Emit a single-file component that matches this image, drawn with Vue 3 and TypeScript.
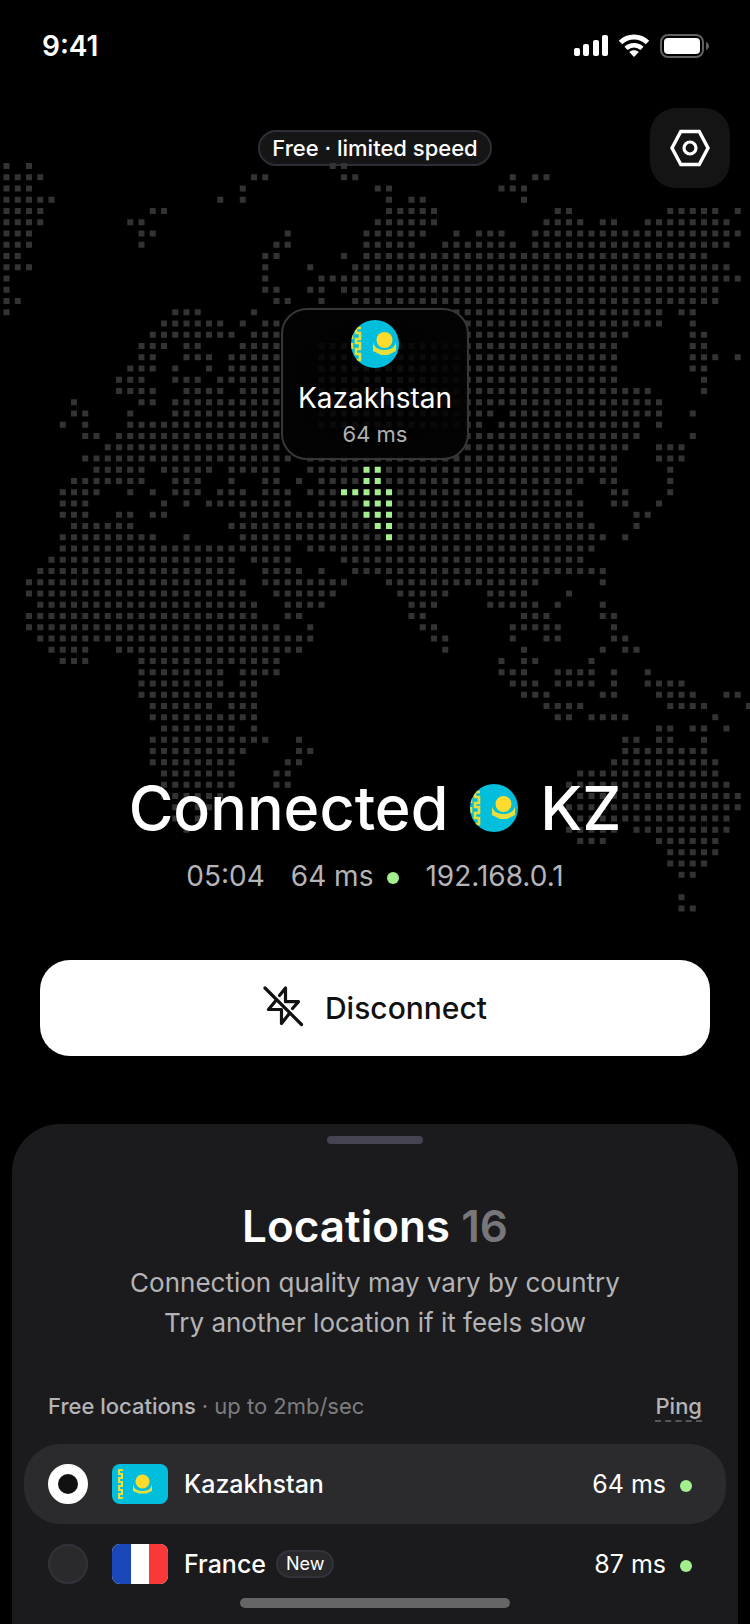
<script setup lang="ts">
import { computed, ref } from 'vue'

interface Location {
  id: string
  name: string
  ping: number
  isNew: boolean
}

const locations: Location[] = [
  { id: 'kz', name: 'Kazakhstan', ping: 64, isNew: false },
  { id: 'fr', name: 'France', ping: 87, isNew: true },
]

const selected = ref('kz')

/* Land cells of the dotted map: one line per grid row, as column ranges. */
const land: string[] = [
  '0 2 29-30',
  '0-3 22-23 30-31 45 47-48',
  '0-2 21 33-34 44-46',
  '0-4 19 21 34 36-37 46',
  '0-3 13-14 34-38 49-50 59-63 65',
  '0-3 11-12 33-38 48-51 53-54 57-64',
  '0-2 12-13 25 32-37 40 42-44 47-65',
  '0-2 12 24-25 32-36 39-45 47-64',
  '0-1 23-24 30 32-62',
  '0-2 23 27 31-64',
  '0 23 28-65',
  '0 23-24 27-28 30-63',
  '0-1 24-25 28 31-63',
  '0 15-17 22 40-58 60-61',
  '14-19 21 23-24 41-58 61',
  '13-20 22-24 41-55 61-62',
  '12-14 16-17 21-24 28-54 61-62',
  '12-13 16-18 20-24 28-54 61-63 65',
  '11-13 15 18 20-24 28-54 61-62',
  '10-12 15-17 19-24 28-54 62',
  '10-13 16-19 21-24 28-57 62',
  '6 12-13 15-24 28-58',
  '6-7 11 15-24 28-43 45-58 61',
  '5 7 11-24 28-42 44-56 58',
  '7-8 10-24 41-56 61',
  '9-24 41-55 58-60',
  '7-25 27-54 58-60',
  '8-12 14-18 20-24 27-31 34-54 59',
  '6-12 15-17 20 23-24 26 28-31 34-51 53-54 59',
  '5-8 11 13 15-17 19-21 23-25 27-29 35-50 54-55 59',
  '5-7 14 16 18-25 28-31 35-51 54-55 58',
  '5-7 10-11 13-14 21-31 35-51 56-57',
  '6-11 20-32 35-52 56',
  '5-13 16 21-33 35-53 55',
  '5-25 27-52',
  '4-20 22-25 30-51',
  '3-20 23-26 28 31-53',
  '2-21 23-30 34-47 53',
  '2-21 24-29 35-39 43-46 50',
  '3-22 25-28 36-38 43-47 49 53',
  '2-22 25-26 36-37 46-48 53-54',
  '2-24 27 37-38 45-49 54',
  '3-27 38-39 45 48-49 54-55',
  '4-7 10-26 39 46 53 55-56',
  '5-7 12-24 44 46-47 52',
  '12-19 21-24 44-46 49-52 54 57',
  '12-19 21-22 45-47 49-52 54 57-60',
  '12-22 46-48 53-54 58-61 64-65',
  '13-18 20-22 48-51 59-62 66',
  '13-22 49-50 52-55 63',
  '14-20 22 58-59 61-62 64',
  '13-23 26 55-56 58-59 62',
  '13-21 26-27 55-62',
  '13-20 25-26 54-63',
  '14-20 24-25 51-63',
  '14-20 24-25 50-64',
  '14-19 51-65',
  '15 17-18 50-65',
  '15 17 51-64',
  '16 50-54 56-64',
  '51-53 58-63',
  '59-63',
  '59-62',
  '60-61',
  '',
  '60',
  '60-61',
]

/* Cells of the connected country, keyed by grid row. */
const active: Record<number, string> = {
  27: '32-33',
  28: '32-33',
  29: '30-34',
  30: '32-34',
  31: '32-34',
  32: '33-34',
  33: '34',
}

const PITCH = 45
const DOT = 24

function rowPath(ranges: string, row: number): string {
  return ranges
    .split(' ')
    .filter(Boolean)
    .map((range) => {
      const [from, to = from] = range.split('-').map(Number)
      let d = ''
      for (let col = from; col <= to; col++) {
        d += `M${14 + col * PITCH} ${12 + row * PITCH}h${DOT}v${DOT}h-${DOT}z`
      }
      return d
    })
    .join('')
}

const landPath = computed(() => land.map(rowPath).join(''))
const activePath = computed(() =>
  Object.entries(active)
    .map(([row, ranges]) => rowPath(ranges, Number(row)))
    .join(''),
)
</script>

<template>
  <main class="screen">
    <header class="status-bar">
      <time class="clock">9:41</time>
      <div class="status-icons">
        <svg width="34" height="22" viewBox="0 0 34 22" fill="#fff" aria-label="Signal">
          <rect x="0" y="13" width="6" height="8" rx="2" />
          <rect x="9" y="9" width="6" height="12" rx="2" />
          <rect x="19" y="5" width="6" height="16" rx="2" />
          <rect x="28" y="0" width="6" height="21" rx="2" />
        </svg>
        <svg width="32" height="24" viewBox="0 0 32 24" fill="none" aria-label="Wi-Fi">
          <path d="M2.5 8.5C10 1.2 22 1.2 29.500 8.500" stroke="#fff" stroke-width="5" />
          <path d="M8 14.300C12.500 10.100 19.500 10.100 24 14.300" stroke="#fff" stroke-width="4.500" />
          <path d="M11.200 18C14 15.600 18 15.600 20.800 18L16 23z" fill="#fff" />
        </svg>
        <svg width="50" height="24" viewBox="0 0 50 24" fill="none" aria-label="Battery">
          <rect x="1" y="1" width="42" height="22" rx="7" stroke="#616161" stroke-width="2" />
          <rect x="4" y="4" width="36" height="16" rx="4" fill="#fff" />
          <path d="M46 8c4 1.500 4 6.500 0 8z" fill="#616161" />
        </svg>
      </div>
    </header>

    <div class="top-bar">
      <p class="plan">Free · limited speed</p>
      <button class="settings" type="button" aria-label="Settings">
        <svg width="40" height="40" viewBox="0 0 40 40" fill="none" stroke="#fff">
          <path d="M10.800 3.500H29.200L38 20L29.200 36.500H10.800L2 20z" stroke-width="3.400" />
          <circle cx="20" cy="20" r="6" stroke-width="3.200" />
        </svg>
      </button>
    </div>

    <svg class="map" viewBox="0 0 3000 3020" aria-hidden="true">
      <path :d="landPath" fill="#333" />
      <path :d="activePath" fill="#a5ee90" />
    </svg>

    <svg class="defs" width="0" height="0" aria-hidden="true">
      <defs>
        <symbol id="kz-round" viewBox="0 0 48 48">
          <clipPath id="kz-clip"><circle cx="24" cy="24" r="24" /></clipPath>
          <g clip-path="url(#kz-clip)">
            <rect width="48" height="48" fill="#00bedc" />
            <path d="M10 8H5v5h4v6H5v4h4v6H5v5h4v6H5M1 14v5M1 23v6M1 34v5" fill="none" stroke="#e9df3c" stroke-width="2.600" />
            <circle cx="33.500" cy="20" r="8" fill="#ffdb2e" />
            <path d="M22 22c1 5 5 8 11.500 8S44 27 45 22v9l-8 4h-7l-8-4z" fill="#e9df3c" />
          </g>
        </symbol>
        <symbol id="flag-kz" viewBox="0 0 56 40">
          <rect width="56" height="40" fill="#00bedc" />
          <path d="M11 6H7v4h3v4H7v4h3v4H7v4h3v4H7v4h4" fill="none" stroke="#e9df3c" stroke-width="2" />
          <circle cx="30.500" cy="17.500" r="7" fill="#ffdb2e" />
          <path d="M21 20c1 5 4 7 9.500 7s8.500-2 9.500-7v7l-6 2.500h-7L21 27z" fill="#e9df3c" />
        </symbol>
        <symbol id="flag-fr" viewBox="0 0 56 40">
          <rect width="56" height="40" fill="#fff" />
          <rect width="19" height="40" fill="#1a47b8" />
          <rect x="37" width="19" height="40" fill="#f93939" />
        </symbol>
      </defs>
    </svg>

    <section class="hero">
      <div class="callout">
        <svg class="round-flag" viewBox="0 0 48 48" aria-hidden="true"><use href="#kz-round" /></svg>
        <strong class="callout-name">Kazakhstan</strong>
        <span class="callout-ping">64 ms</span>
      </div>

      <h1 class="state">
        <span>Connected</span>
        <svg class="round-flag" viewBox="0 0 48 48" aria-hidden="true"><use href="#kz-round" /></svg>
        <span>KZ</span>
      </h1>

      <div class="stats">
        <span>05:04</span>
        <span class="with-dot">64 ms<i class="dot"></i></span>
        <span>192.168.0.1</span>
      </div>

      <button class="disconnect" type="button">
        <svg width="40" height="40" viewBox="0 2 40 40" fill="none" stroke="#111" stroke-width="3.200" stroke-linecap="round" stroke-linejoin="round" overflow="visible" aria-hidden="true">
          <path d="M2 2L38.500 38.500" />
          <path d="M16.500 9.500L22.500 2V15.700H35.500L29.500 22.500" />
          <path d="M12.500 15L5.500 23.500H18.500V37.500L26 28" />
        </svg>
        Disconnect
      </button>
    </section>

    <section class="sheet">
      <div class="handle"></div>
      <h2 class="title">Locations <span class="count">16</span></h2>
      <p class="subtitle">Connection quality may vary by country<br />Try another location if it feels slow</p>

      <div class="list-head">
        <p class="group">Free locations <span class="limit">· up to 2mb/sec</span></p>
        <button class="ping-sort" type="button">Ping</button>
      </div>

      <div class="list" role="radiogroup" aria-label="Free locations">
        <label
          v-for="place in locations"
          :key="place.id"
          class="row"
          :class="{ chosen: selected === place.id }"
        >
          <input v-model="selected" class="radio" type="radio" name="location" :value="place.id" />
          <svg class="flag" viewBox="0 0 56 40" aria-hidden="true"><use :href="`#flag-${place.id}`" /></svg>
          <span class="name">{{ place.name }}</span>
          <span v-if="place.isNew" class="new">New</span>
          <span class="with-dot ping">{{ place.ping }} ms<i class="dot"></i></span>
        </label>
      </div>
    </section>

    <div class="home-indicator"></div>
  </main>
</template>

<style>
body {
  margin: 0;
  background: #000;
}
</style>

<style scoped>
.screen {
  position: relative;
  box-sizing: border-box;
  min-height: 100vh;
  display: flex;
  flex-direction: column;
  overflow: hidden;
  background: #000;
  color: #fff;
  font-family: Inter, 'Liberation Sans', sans-serif;
}

p,
h1,
h2 {
  margin: 0;
}

button {
  border: 0;
  font-family: inherit;
  cursor: pointer;
}

.status-bar {
  display: flex;
  justify-content: space-between;
  align-items: center;
  height: 92px;
  padding: 0 40px 0 42px;
}

.clock {
  font-size: 28px;
  font-weight: 600;
}

.status-icons {
  display: flex;
  align-items: center;
  gap: 10px;
}

.top-bar {
  display: grid;
  grid-template-columns: 1fr auto 1fr;
  align-items: center;
  margin-top: 16px;
  padding: 0 20px;
}

.plan {
  grid-column: 2;
  box-sizing: border-box;
  height: 36px;
  padding: 0 12px;
  border: 2px solid #2e2d38;
  border-radius: 18px;
  background: #151515;
  font-size: 22px;
  font-weight: 500;
  line-height: 32px;
}

.settings {
  justify-self: end;
  display: grid;
  place-items: center;
  width: 80px;
  height: 80px;
  padding: 0;
  border-radius: 26px;
  background: #141414;
}

.map {
  position: absolute;
  top: 160px;
  left: 0;
  width: 100%;
}

.defs {
  position: absolute;
}

.hero {
  position: relative;
  display: flex;
  flex-direction: column;
  align-items: center;
  padding: 120px 40px 68px;
}

.callout {
  display: flex;
  flex-direction: column;
  align-items: center;
  box-sizing: border-box;
  height: 152px;
  padding: 10px 15px;
  border: 2px solid #373737;
  border-radius: 26px;
  background: radial-gradient(rgba(0, 0, 0, 0.65), rgba(3, 3, 3, 0.92) 70%);
}

.round-flag {
  flex: none;
  width: 48px;
  height: 48px;
}

.callout-name {
  margin-top: 10px;
  font-size: 28px;
  font-weight: 400;
  line-height: 40px;
}

.callout-ping {
  color: #b0b0b2;
  font-size: 22px;
  line-height: 32px;
}

.state {
  display: flex;
  align-items: center;
  gap: 22px;
  margin-top: 310px;
  font-size: 61px;
  font-weight: 500;
  line-height: 76px;
}

.stats {
  display: flex;
  gap: 26px;
  margin-top: 10px;
  color: #b4b4b9;
  font-size: 28px;
  line-height: 40px;
}

.with-dot {
  display: flex;
  align-items: center;
  gap: 14px;
}

.dot {
  width: 12px;
  height: 12px;
  margin-top: 3px;
  border-radius: 50%;
  background: #a5ee90;
}

.disconnect {
  display: flex;
  justify-content: center;
  align-items: center;
  gap: 22px;
  width: 100%;
  height: 96px;
  margin-top: 64px;
  border-radius: 30px;
  background: #fff;
  color: #111;
  font-size: 30px;
  font-weight: 500;
}

.sheet {
  flex: 1;
  margin: 0 12px;
  padding: 12px 12px 20px;
  border-radius: 48px 48px 0 0;
  background: #1b1b1d;
  text-align: center;
}

.handle {
  width: 96px;
  height: 8px;
  margin: 0 auto;
  border-radius: 4px;
  background: #464452;
}

.title {
  margin-top: 54px;
  font-size: 44px;
  font-weight: 600;
  line-height: 56px;
}

.count {
  color: #77777b;
}

.subtitle {
  margin-top: 9px;
  color: #b4b4b7;
  font-size: 26px;
  line-height: 40px;
}

.list-head {
  display: flex;
  justify-content: space-between;
  align-items: flex-start;
  margin-top: 49px;
  padding: 0 24px;
}

.group {
  color: #b4b4b7;
  font-size: 22px;
  font-weight: 500;
  line-height: 28px;
}

.limit {
  color: #7d7d80;
  font-weight: 400;
}

.ping-sort {
  padding: 0;
  border-bottom: 2px dashed #55545f;
  background: none;
  color: #b4b4b7;
  font-size: 22px;
  font-weight: 500;
  line-height: 28px;
}

.list {
  margin-top: 22px;
}

.row {
  display: flex;
  align-items: center;
  height: 80px;
  padding: 0 34px 0 24px;
  border-radius: 36px;
}

.chosen {
  background: #2b2b2d;
}

.radio {
  appearance: none;
  box-sizing: border-box;
  width: 40px;
  height: 40px;
  margin: 0 24px 0 0;
  border: 2px solid #33323c;
  border-radius: 50%;
  background: #2a2a2d;
}

.radio:checked {
  border: 10px solid #fff;
  background: #111;
}

.flag {
  width: 56px;
  height: 40px;
  border-radius: 8px;
}

.name {
  margin-left: 16px;
  font-size: 25px;
  font-weight: 500;
}

.new {
  box-sizing: border-box;
  height: 28px;
  margin-left: 10px;
  padding: 0 8px;
  border: 2px solid #33323c;
  border-radius: 14px;
  background: #29292c;
  font-size: 18px;
  line-height: 24px;
}

.ping {
  margin-left: auto;
  font-size: 25px;
}

.home-indicator {
  position: absolute;
  bottom: 16px;
  left: 32%;
  width: 36%;
  height: 10px;
  border-radius: 5px;
  background: #666;
}
</style>
